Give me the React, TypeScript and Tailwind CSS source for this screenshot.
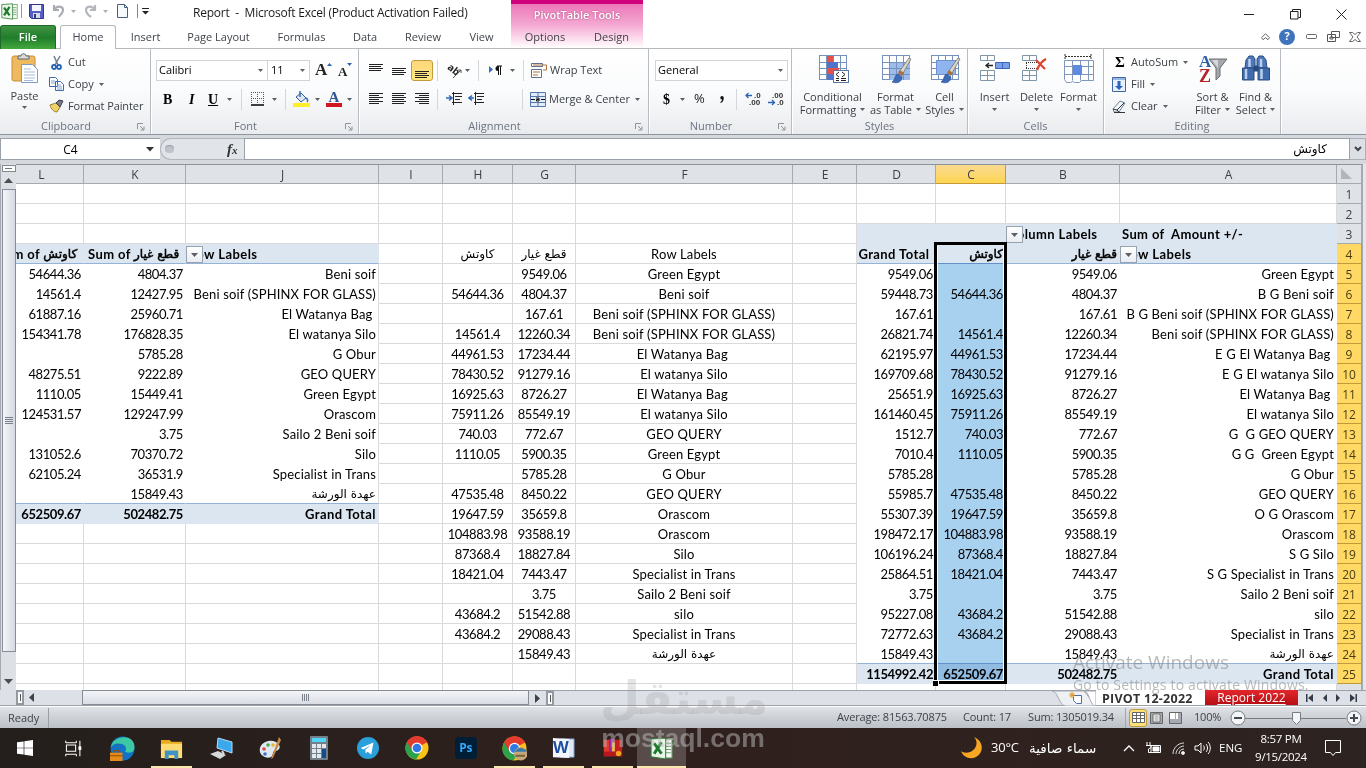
import React from 'react';

type Cell = string | null;

const GRID = 'grid grid-cols-[68px_102px_193px_64px_70px_63px_217px_64px_79px_70px_114px_217px_25px]';
const COLS = ['L', 'K', 'J', 'I', 'H', 'G', 'F', 'E', 'D', 'C', 'B', 'A'];

// one line per sheet row: L, K, J, I, H, G, F, E, D, C, B, A
const rows: Cell[][] = [
  [null, null, null, null, null, null, null, null, null, null, null, null],
  [null, null, null, null, null, null, null, null, null, null, null, null],
  [null, null, null, null, null, null, null, null, null, null, 'Column Labels', 'Sum of  Amount +/-'],
  ['Sum of كاوتش ', 'Sum of قطع غيار ', 'Row Labels', null, 'كاوتش', 'قطع غيار', 'Row Labels', null, 'Grand Total ', 'كاوتش', 'قطع غيار', 'Row Labels'],
  ['54644.36', '4804.37', 'Beni soif', null, null, '9549.06', 'Green Egypt', null, '9549.06', null, '9549.06', 'Green Egypt'],
  ['14561.4', '12427.95', 'Beni soif (SPHINX FOR GLASS)', null, '54644.36', '4804.37', 'Beni soif', null, '59448.73', '54644.36', '4804.37', 'B G Beni soif'],
  ['61887.16', '25960.71', 'El Watanya Bag ', null, null, '167.61', 'Beni soif (SPHINX FOR GLASS)', null, '167.61', null, '167.61', 'B G Beni soif (SPHINX FOR GLASS)'],
  ['154341.78', '176828.35', 'El watanya Silo', null, '14561.4', '12260.34', 'Beni soif (SPHINX FOR GLASS)', null, '26821.74', '14561.4', '12260.34', 'Beni soif (SPHINX FOR GLASS)'],
  [null, '5785.28', 'G Obur', null, '44961.53', '17234.44', 'El Watanya Bag ', null, '62195.97', '44961.53', '17234.44', 'E G El Watanya Bag '],
  ['48275.51', '9222.89', 'GEO QUERY', null, '78430.52', '91279.16', 'El watanya Silo', null, '169709.68', '78430.52', '91279.16', 'E G El watanya Silo'],
  ['1110.05', '15449.41', 'Green Egypt', null, '16925.63', '8726.27', 'El Watanya Bag ', null, '25651.9', '16925.63', '8726.27', 'El Watanya Bag '],
  ['124531.57', '129247.99', 'Orascom', null, '75911.26', '85549.19', 'El watanya Silo', null, '161460.45', '75911.26', '85549.19', 'El watanya Silo'],
  [null, '3.75', 'Sailo 2 Beni soif', null, '740.03', '772.67', 'GEO QUERY', null, '1512.7', '740.03', '772.67', 'G  G GEO QUERY'],
  ['131052.6', '70370.72', 'Silo', null, '1110.05', '5900.35', 'Green Egypt', null, '7010.4', '1110.05', '5900.35', 'G G  Green Egypt'],
  ['62105.24', '36531.9', 'Specialist in Trans', null, null, '5785.28', 'G Obur', null, '5785.28', null, '5785.28', 'G Obur'],
  [null, '15849.43', 'عهدة الورشة', null, '47535.48', '8450.22', 'GEO QUERY', null, '55985.7', '47535.48', '8450.22', 'GEO QUERY'],
  ['652509.67', '502482.75', 'Grand Total', null, '19647.59', '35659.8', 'Orascom', null, '55307.39', '19647.59', '35659.8', 'O G Orascom'],
  [null, null, null, null, '104883.98', '93588.19', 'Orascom', null, '198472.17', '104883.98', '93588.19', 'Orascom'],
  [null, null, null, null, '87368.4', '18827.84', 'Silo', null, '106196.24', '87368.4', '18827.84', 'S G Silo'],
  [null, null, null, null, '18421.04', '7443.47', 'Specialist in Trans', null, '25864.51', '18421.04', '7443.47', 'S G Specialist in Trans'],
  [null, null, null, null, null, '3.75', 'Sailo 2 Beni soif', null, '3.75', null, '3.75', 'Sailo 2 Beni soif'],
  [null, null, null, null, '43684.2', '51542.88', 'silo', null, '95227.08', '43684.2', '51542.88', 'silo'],
  [null, null, null, null, '43684.2', '29088.43', 'Specialist in Trans', null, '72772.63', '43684.2', '29088.43', 'Specialist in Trans'],
  [null, null, null, null, null, '15849.43', 'عهدة الورشة', null, '15849.43', null, '15849.43', 'عهدة الورشة'],
  [null, null, null, null, null, null, null, null, '1154992.42', '652509.67', '502482.75', 'Grand Total'],
];

function cellClass(r: number, c: number, v: Cell) {
  const left = c <= 2 && r >= 4 && r <= 17;
  const right = c >= 8 && r >= 3;
  const head = (left && r === 4) || (right && (r === 3 || r === 4));
  const total = (left && r === 17) || (right && r === 25);
  const label = v !== null && !/^[\d.]+$/.test(v);
  let cls = '';
  if (head || total) cls += ' bg-[#dce6f1] font-bold';
  if (!label) cls += ' tracking-[-0.42px]';
  else if (head && (c <= 1 || r === 3)) cls += ' tracking-[0.38px]';
  else if (head || total) cls += ' tracking-[0.42px]';
  else cls += ' tracking-[0.16px]';
  if (head && r === 4) cls += ' border-b border-b-[#95b3d7]';
  else if ((left && r === 16) || (right && r === 24)) cls += ' border-b border-b-[#95b3d7]';
  else if (!left && !right) cls += ' border-b border-b-[#d9dadc]';
  else cls += ' border-b border-b-transparent';
  if ((!left && !right) || (c === 2 && r !== 4 && r !== 17)) cls += ' border-r border-r-[#d9dadc]';
  else cls += ' border-r border-r-transparent';
  if (c >= 4 && c <= 6) cls += ' justify-center';
  else if (r <= 4 && (c === 2 || c === 11 || (c === 10 && r === 3))) cls += ' justify-start';
  else cls += ' justify-end';
  return cls;
}

const isArabic = (s: string) => /[\u0600-\u06ff]/.test(s);

function Arabic({ text, bold }: { text: string; bold: boolean }) {
  const parts = text.split(/([\u0600-\u06ff][\u0600-\u06ff ]*)/).filter(Boolean);
  return (
    <>
      {parts.map((p, i) => (
        <span key={i} className={'shrink-0 ' + (isArabic(p) ? "font-['DejaVu_Sans',sans-serif] text-[12px] font-normal tracking-normal " + (bold ? '[-webkit-text-stroke:0.5px_#000]' : '') : '')}>{p}</span>
      ))}
    </>
  );
}

function FilterButton() {
  return (
    <span className="absolute left-0 top-[2px] flex h-[17px] w-[17px] items-center justify-center border border-[#98a3b1] bg-gradient-to-b from-white to-[#e9edf2]">
      <svg width="7" height="4" viewBox="0 0 7 4"><path d="M0 0h7L3.500 4z" fill="#5b6068" /></svg>
    </span>
  );
}

function Arrow({ className = '' }: { className?: string }) {
  return (
    <svg width="5" height="3" viewBox="0 0 5 3" className={'shrink-0 ' + className}>
      <path d="M0 0h5L2.5 3z" fill="#5b6068" />
    </svg>
  );
}

function Launcher() {
  return (
    <svg width="8" height="8" viewBox="0 0 8 8" className="absolute bottom-[3px] right-[5px]" fill="none" stroke="#8d929a">
      <path d="M.5 6V.5H6M3 3l3.5 3.5M7 3.5V7H3.5" />
    </svg>
  );
}

function Group({ label, width, launcher, children }: { label: string; width: string; launcher?: boolean; children: React.ReactNode }) {
  return (
    <section className={'relative flex h-full shrink-0 flex-col border-r border-[#b9bdc3] shadow-[1px_0_0_#fff] ' + width}>
      <div className="h-[70px]">{children}</div>
      <div className={'text-center text-[11px] leading-[16px] text-[#6c7380] ' + (launcher ? 'pr-[18px]' : '')}>{label}</div>
      {launcher && <Launcher />}
    </section>
  );
}

function Sep({ className = '' }: { className?: string }) {
  return <span className={'h-[21px] w-px shrink-0 bg-[#d3d6da] ' + className} />;
}

function Big({ icon, a, b, width }: { icon: React.ReactNode; a: string; b?: string; width: string }) {
  return (
    <div className={'flex shrink-0 flex-col items-center whitespace-nowrap pt-[5px] leading-[13px] ' + width}>
      <div className="flex h-[36px] items-start">{icon}</div>
      <div>{a}</div>
      <div className="flex h-[13px] items-center">
        {b}
        <Arrow className={b ? 'ml-[4px]' : ''} />
      </div>
    </div>
  );
}

function Lines({ w, y, className = '' }: { w: number[]; y: number; className?: string }) {
  return (
    <svg width="16" height="16" viewBox="0 0 16 16" className={'shrink-0 ' + className}>
      {w.map((n, i) => <rect key={i} x={n > 0 ? 1 : 15 + n} y={y + i * 2} width={Math.abs(n)} height="1" fill="#222" />)}
    </svg>
  );
}

function TableIcon({ kind }: { kind: 'cond' | 'table' | 'style' }) {
  return (
    <svg width="32" height="32" viewBox="0 0 32 32">
      <rect x="2.500" y="1.500" width="27" height="24" fill="#fff" stroke="#7791bd" />
      {kind === 'table' && <rect x="9" y="8" width="21" height="18" fill="#9dbcec" />}
      <path d="M9.500 2v24M16.500 2v24M23.500 2v24M2 8.500h28M2 14.500h28M2 20.500h28" stroke="#7791bd" fill="none" />
      {kind === 'style' && <rect x="7.500" y="6.500" width="19" height="14" fill="#8fb4f0" stroke="#6f92cf" />}
      {kind === 'cond' && (
        <>
          <path d="M10 2h6v6h-6zM10 14h12v6H10z" fill="#e2514a" />
          <path d="M10 8h11v6H10zM10 20h6v6h-6z" fill="#4f74c9" />
          <rect x="16.500" y="16.500" width="15" height="12" fill="#fff" stroke="#5c76a3" />
          <path d="M22 18l-3 2.500 3 2.500M19 24.500h3M25 18l3 2.500-3 2.500M24 24.500h5M24 26.500h5M19 26.500h3" fill="none" stroke="#222" />
        </>
      )}
      {kind !== 'cond' && (
        <>
          <path d="M31 5l-2-1-10 14 3 3z" fill="#d8d5cf" stroke="#77726b" strokeWidth=".8" />
          <path d="M20 16l-2 3 4 3 2-3z" fill="#a97142" />
          <path d="M18 20c-4 1-2 5-6 8 5 2 10 0 10-5z" fill="#3c6cb8" stroke="#2b4c86" strokeWidth=".6" />
        </>
      )}
    </svg>
  );
}

function CellsIcon({ kind }: { kind: 'insert' | 'delete' | 'format' }) {
  if (kind === 'format') {
    return (
      <svg width="32" height="32" viewBox="0 0 32 32">
        <path d="M2 2.500h26M2 0v5M28 0v5" stroke="#333" strokeDasharray="2 1" />
        <path d="M1.500 6.500h29v20h-12l-2 2h-5l-2-1-2 1h-4l-2-3z" fill="#fff" stroke="#7f97bd" />
        <path d="M1.500 12.500h29M1.500 20.500h29M9.500 6.500v20M17.500 6.500v20M25.500 6.500v20" stroke="#7f97bd" />
        <rect x="10" y="11" width="9" height="10" fill="#5e8ae0" />
      </svg>
    );
  }
  return (
    <svg width="32" height="32" viewBox="0 0 32 32">
      <path d="M1.500 1.500h14v5h-14zM8.500 1.500v5M1.500 16.500h14v10h-14zM8.500 16.500v10M1.500 21.500h14" fill="#fff" stroke="#7f97a8" />
      {kind === 'insert' ? (
        <>
          <path d="M16.500 8.500h14v6h-14zM23.500 8.500v6" fill="#79a0ea" stroke="#3f66b4" />
          <path d="M7 11.500h7M10 9l-3 2.500 3 2.500" fill="none" stroke="#222" strokeWidth="1.300" />
        </>
      ) : (
        <>
          <path d="M5.500 9v5M5 8.500h12M5 14.500h12" stroke="#333" strokeDasharray="1 1" />
          <path d="M15 6l9 9M25 5c-4 2-7 6-9 11" stroke="#e0422d" strokeWidth="2.200" fill="none" />
        </>
      )}
    </svg>
  );
}

function ExcelLogo({ size }: { size: number }) {
  return (
    <svg width={size} height={size} viewBox="0 0 22 22" className="shrink-0">
      <rect x="8" y="2" width="13" height="18" fill="#f4faf3" stroke="#6aa568" />
      <path d="M15 6h5M15 9h5M15 12h5M15 15h5" stroke="#6aa568" />
      <path d="M1 2l14-1v20L1 19z" fill="#e9f5e7" stroke="#2d7a33" />
      <path d="M4 6l7 10M11 5L4 16" stroke="#1c7a2c" strokeWidth="2.800" />
    </svg>
  );
}

function Chrome() {
  return (
    <>
      <circle cx="12" cy="12" r="11.500" fill="#fbc116" />
      <path d="M12 12L2 6.200A11.500 11.500 0 0 1 22 6.200z" fill="#e33b2e" />
      <path d="M12 12L2 6.200A11.500 11.500 0 0 0 11 23.500l5.500-9z" fill="#2ba24c" />
      <path d="M12 6.500h10.300A11.500 11.500 0 0 0 2 6.200l5.200 8.500z" fill="#e33b2e" />
      <circle cx="12" cy="12" r="5.500" fill="#fff" />
      <circle cx="12" cy="12" r="4.300" fill="#2f78e8" />
    </>
  );
}

function Task({ children, size = 24, active }: { children: React.ReactNode; size?: number; active?: boolean }) {
  return (
    <div className="relative flex h-full w-[49px] shrink-0 items-center justify-center">
      <svg width={size} height={size} viewBox="0 0 24 24">{children}</svg>
      {active && <span className="absolute inset-x-[4px] bottom-0 h-[2px] bg-[#f8e8ac]" />}
    </div>
  );
}

function TitleBar() {
  return (
    <div className="flex h-[25px] shrink-0 bg-white">
      <div className="flex w-[193px] shrink-0 items-center pb-[3px] pl-px">
        <ExcelLogo size={17} />
        <span className="ml-[3px] h-[14px] w-px bg-[#999]" />
        <svg width="15" height="15" viewBox="0 0 15 15" className="ml-[7px]">
          <path d="M.5.500h14v14h-12l-2-2z" fill="#5560c4" stroke="#2f3689" />
          <rect x="3" y="1" width="9" height="6" fill="#f4f6ff" />
          <rect x="4" y="9" width="7" height="5" fill="#d7dbe8" />
          <rect x="5" y="10" width="2" height="4" fill="#333a80" />
        </svg>
        <svg width="13" height="14" viewBox="0 0 13 14" className="ml-[8px]" fill="none" stroke="#a9adb3" strokeWidth="2.200">
          <path d="M2 1v5h5M2 6c3-5 9-4 9 0 0 3-3 5-4 7" />
        </svg>
        <Arrow className="ml-[6px] opacity-50" />
        <svg width="13" height="14" viewBox="0 0 13 14" className="ml-[8px]" fill="none" stroke="#b4b8be" strokeWidth="2.200">
          <path d="M11 1v5H6M11 6C8 1 2 2 2 6c0 3 2 5 5 7" />
        </svg>
        <Arrow className="ml-[6px] opacity-50" />
        <svg width="11" height="14" viewBox="0 0 11 14" className="ml-[9px]">
          <path d="M.5.500h7l3 3v10H.5z" fill="#f6fafd" stroke="#46607c" />
          <path d="M7.500.500v3h3" fill="none" stroke="#46607c" />
        </svg>
        <span className="ml-[9px] h-[14px] w-px bg-[#888]" />
        <svg width="7" height="7" viewBox="0 0 7 7" className="ml-[4px]"><path d="M0 .5h7" stroke="#222" /><path d="M0 3h7L3.500 6.500z" fill="#222" /></svg>
      </div>
      <div className="w-[318px] shrink-0 whitespace-pre pt-px text-[12px] leading-[24px] tracking-[-0.24px] text-[#1b1b1b]">Report  -  Microsoft Excel (Product Activation Failed)</div>
      <div className="w-[132px] shrink-0 border-t-4 border-[#d0007c] bg-gradient-to-b from-[#ec76b8] to-[#f3a9d2] text-center text-[11px] font-semibold leading-[22px] text-white [text-shadow:0_0_2px_#a0407a]">PivotTable Tools</div>
      <div className="flex flex-1 items-center justify-end gap-[35px] pr-[19px] pt-[3px]">
        <svg width="11" height="11" viewBox="0 0 11 11"><path d="M0 5.500h10" stroke="#222" /></svg>
        <svg width="11" height="11" viewBox="0 0 11 11" fill="none" stroke="#222"><path d="M.5 2.500h7.500v7.500H.5zM2.500 2.500v-2h8v8h-2" /></svg>
        <svg width="11" height="11" viewBox="0 0 11 11" stroke="#222"><path d="M.5.500l10 10M10.500.500l-10 10" /></svg>
      </div>
    </div>
  );
}

function TabBar() {
  const tab = 'flex h-full shrink-0 items-center justify-center pt-px';
  return (
    <div className="flex h-[24px] shrink-0 bg-white text-[11px] text-[#3f444b] shadow-[inset_0_-1px_0_#b5b9be]">
      <div className="flex w-[56px] shrink-0 items-center justify-center rounded-t-[3px] border border-b-0 border-[#1e6a26] bg-gradient-to-b from-[#3f9443] via-[#1f7d2b] to-[#43a83c] font-semibold text-white">File</div>
      <div className="ml-[4px] flex w-[56px] shrink-0 items-center justify-center rounded-t-[3px] border border-b-0 border-[#b5b9be] bg-white">Home</div>
      <div className={tab + ' ml-px w-[57px]'}>Insert</div>
      <div className={tab + ' w-[89px]'}>Page Layout</div>
      <div className={tab + ' w-[77px]'}>Formulas</div>
      <div className={tab + ' w-[50px]'}>Data</div>
      <div className={tab + ' w-[66px]'}>Review</div>
      <div className={tab + ' w-[51px]'}>View</div>
      <div className="mb-px ml-[4px] flex w-[132px] shrink-0 bg-gradient-to-b from-[#f3a9d2] to-white">
        <div className={tab + ' w-[68px]'}>Options</div>
        <div className={tab + ' w-[65px]'}>Design</div>
      </div>
      <div className="flex flex-1 items-center justify-end gap-[9px] pb-px pr-[5px]">
        <svg width="9" height="8" viewBox="0 0 9 8" fill="#fff" stroke="#666"><path d="M4.500.700l4 4-1.500 2-2.500-2-2.500 2-1.500-2z" /></svg>
        <span className="mr-[2px] flex h-[16px] w-[16px] items-center justify-center rounded-full bg-[#3f74bd] text-[11px] font-bold text-white">?</span>
        <svg width="12" height="6" viewBox="0 0 12 6" fill="#fff" stroke="#666"><rect x=".5" y=".5" width="10" height="4" rx="1" /></svg>
        <svg width="13" height="11" viewBox="0 0 13 11" fill="#fff" stroke="#555"><path d="M4.500.500h8v6h-8zM.5 3.500h8v7h-8zM3 6h3v2H3z" /></svg>
        <svg width="12" height="10" viewBox="0 0 12 10" fill="#fff" stroke="#666"><path d="M.500.500h3L6 2.500l2.500-2h3L8 5l3.500 4.500h-3L6 7.500l-2.500 2h-3L4 5z" /></svg>
      </div>
    </div>
  );
}

function Ribbon() {
  const serif = "shrink-0 font-['Liberation_Serif',serif] font-bold text-[14px] text-black";
  return (
    <div className="flex h-[86px] shrink-0 border-b border-[#8f959d] bg-gradient-to-b from-white via-[#fafbfc] to-[#e9ebee] text-[11px] text-[#3a3f46]">
      <Group label="Clipboard" width="w-[151px]" launcher>
        <div className="flex">
          <div className="flex w-[49px] shrink-0 flex-col items-center pt-[4px]">
            <svg width="28" height="32" viewBox="0 0 28 32">
              <rect x="1" y="3" width="23" height="25" rx="2" fill="#efb95e" stroke="#c58f3a" />
              <path d="M7 6V3h3c0-3 5-3 5 0h3v3z" fill="#d8dade" stroke="#61656b" />
              <path d="M10.500 11.500h11l5 5v13h-16z" fill="#fff" stroke="#7f9ac4" />
              <path d="M13 16h7M13 19h11M13 22h11M13 25h11M13 27.500h9" stroke="#a5bbdc" />
            </svg>
            <div className="mt-[4px] leading-[14px]">Paste</div>
            <Arrow className="mt-[3px]" />
          </div>
          <div className="flex flex-col whitespace-nowrap pt-[2px] leading-[22px]">
            <div className="flex h-[22px] items-center gap-[4px]">
              <svg width="15" height="15" viewBox="0 0 15 15" fill="none"><path d="M5 1l4 9M11 1L6 10" stroke="#6e7f94" strokeWidth="1.500" /><circle cx="5" cy="12" r="2" stroke="#2a63b4" strokeWidth="1.800" /><circle cx="10" cy="12" r="2" stroke="#2a63b4" strokeWidth="1.800" /></svg>Cut
            </div>
            <div className="flex h-[22px] items-center gap-[4px]">
              <svg width="15" height="14" viewBox="0 0 15 14" fill="#fff" stroke="#3d6aac"><path d="M.500.500h6l2 2v7h-8zM6.500 4.500h5l3 3v6h-8z" /><path d="M2 4h4M2 6h4M8 8h4M8 10h5M8 12h5" stroke="#7fa3d8" /></svg>Copy <Arrow className="ml-px" />
            </div>
            <div className="flex h-[22px] items-center gap-[4px] tracking-[-0.1px]">
              <svg width="15" height="14" viewBox="0 0 15 14"><path d="M1 6l6-2 4 4-3 5c-3 0-6-3-7-7z" fill="#f0d268" stroke="#9c812b" /><path d="M7 4l3-3 4 1-3 6z" fill="#777986" stroke="#3d3f4a" /></svg>Format Painter
            </div>
          </div>
        </div>
      </Group>

      <Group label="Font" width="w-[208px]" launcher>
        <div className="flex h-[32px] items-end pl-[5px] text-black">
          <div className="flex h-[21px] w-[112px] shrink-0 items-center justify-between border border-[#d1d4d9] bg-white pl-[2px] pr-[4px]">Calibri<Arrow /></div>
          <div className="-ml-px flex h-[21px] w-[43px] shrink-0 items-center justify-between border border-[#d1d4d9] bg-white pl-[3px] pr-[4px]">11<Arrow /></div>
          <span className="ml-[5px] flex h-[21px] w-[22px] shrink-0 font-['Liberation_Serif',serif] text-[17px] font-bold leading-[20px] text-[#222]">A<svg width="5" height="3" viewBox="0 0 5 3" className="mt-[3px]"><path d="M0 3h5L2.500 0z" fill="#3463ad" /></svg></span>
          <span className="flex h-[21px] w-[18px] shrink-0 pl-px font-['Liberation_Serif',serif] text-[13px] font-bold leading-[23px] text-[#222]">A<svg width="5" height="3" viewBox="0 0 5 3" className="mt-[3px]"><path d="M0 0h5L2.500 3z" fill="#3463ad" /></svg></span>
        </div>
        <div className="flex h-[33px] items-center pl-[12px] pt-[3px]">
          <span className={serif + ' w-[23px]'}>B</span>
          <span className={serif + ' w-[22px] pl-[3px] italic'}>I</span>
          <span className={serif + ' w-[19px] underline'}>U</span>
          <Arrow className="mr-[9px]" />
          <Sep />
          <svg width="14" height="14" viewBox="0 0 14 14" className="ml-[9px] mr-[7px] shrink-0"><path d="M0 .5h13M0 6.500h13M.5 0v12M6.500 0v12M12.500 0v12" stroke="#555" strokeDasharray="1 1" /><path d="M0 13h13" stroke="#000" strokeWidth="1.500" /></svg>
          <Arrow className="mr-[8px]" />
          <Sep />
          <svg width="17" height="16" viewBox="0 0 17 16" className="ml-[7px] mr-[5px] shrink-0"><path d="M3 6l5-4 5 5-5 4z" fill="#dce6f4" stroke="#3b5b8c" /><path d="M7 0v6M13 7c2 1 2 3 1 4" stroke="#3b6cb8" strokeWidth="1.500" fill="none" /><rect y="12" width="17" height="4" fill="#ffef29" /></svg>
          <Arrow className="mr-[6px]" />
          <span className="mr-[5px] flex w-[16px] shrink-0 flex-col items-center"><b className="font-['Liberation_Serif',serif] text-[15px] leading-[12px] text-[#2f5597]">A</b><i className="h-[4px] w-full bg-[#d11521]" /></span>
          <Arrow />
        </div>
      </Group>

      <Group label="Alignment" width="w-[290px]" launcher>
        <div className="flex h-[32px] items-end pl-[9px]">
          <Lines w={[14, 12, 14, 12]} y={1} className="mb-[2px]" />
          <Lines w={[14, 12, 14, 12]} y={5} className="mb-[2px] ml-[7px]" />
          <div className="ml-[4px] flex h-[21px] w-[22px] shrink-0 items-center justify-center rounded-[3px] border border-[#c29b3d] bg-gradient-to-b from-[#fdd77c] to-[#ffe77f]"><Lines w={[14, 12, 14, 12]} y={8} /></div>
          <Sep className="ml-[4px]" />
          <span className="ml-[9px] flex h-[21px] w-[23px] shrink-0 items-center justify-between"><svg width="16" height="16" viewBox="0 0 16 16"><text x="0" y="9" transform="rotate(38 5 7)" fontSize="10" fontWeight="700" fill="#222">ab</text><path d="M6 15l8-8M11 7h3v3" stroke="#555" fill="none" /></svg><Arrow /></span>
          <Sep className="ml-[8px]" />
          <span className="ml-[10px] flex h-[21px] w-[26px] shrink-0 items-center justify-between"><svg width="13" height="11" viewBox="0 0 13 11"><path d="M0 1v7l4-3.500z" fill="#3a69b6" /><path d="M8 1h5M9.500 1v9M11.500 1v9" stroke="#111" /><path d="M9 1a2.500 2.500 0 0 0 0 5z" fill="#111" /></svg><Arrow /></span>
          <Sep className="ml-[8px]" />
          <span className="ml-[7px] flex h-[21px] shrink-0 items-center gap-[3px] whitespace-nowrap"><svg width="16" height="15" viewBox="0 0 16 15"><path d="M.500.500h11v3H.5zM.5 6.500h10v8H.5z" fill="#fff" stroke="#5e708c" /><path d="M2 2h13.500v5H12M2 9h7M2 12h5" fill="none" stroke="#b0723c" /></svg>Wrap Text</span>
        </div>
        <div className="flex h-[33px] items-center pl-[9px] pt-[3px]">
          <Lines w={[14, 10, 14, 10, 14, 10]} y={2} />
          <Lines w={[14, 12, 14, 12, 14, 12]} y={2} className="ml-[7px]" />
          <Lines w={[-14, -10, -14, -10, -14, -10]} y={2} className="ml-[7px]" />
          <Sep className="ml-[7px]" />
          <svg width="17" height="14" viewBox="0 0 17 14" className="ml-[8px] shrink-0"><path d="M6 1.500h10M9 4.500h7M9 7.500h5M6 10.500h10M7.500 0v13" stroke="#222" /><path d="M0 6h5M3 3.500L6 6 3 8.500" stroke="#2f65b8" strokeWidth="1.500" fill="none" /></svg>
          <svg width="17" height="14" viewBox="0 0 17 14" className="ml-[5px] shrink-0"><path d="M6 1.500h10M9 4.500h7M9 7.500h5M6 10.500h10M7.500 0v13" stroke="#222" /><path d="M1 6h5M4 3.500L1 6l3 2.500" stroke="#2f65b8" strokeWidth="1.500" fill="none" /></svg>
          <Sep className="ml-[37px]" />
          <span className="ml-[7px] flex shrink-0 items-center gap-[3px] whitespace-nowrap"><svg width="16" height="15" viewBox="0 0 16 15"><path d="M.500.500h15v14H.5zM.5 4.500h15M.5 10.500h15M8 .5v4M8 10.500v4" fill="#e2ebf8" stroke="#5577a8" /><path d="M1 7.500h4M15 7.500h-4M6 6h3v3H6.500V7.500H9" stroke="#111" fill="none" /></svg>Merge &amp; Center <Arrow className="ml-[2px]" /></span>
        </div>
      </Group>

      <Group label="Number" width="w-[143px]" launcher>
        <div className="flex h-[32px] items-end pl-[6px] text-black">
          <div className="flex h-[21px] w-[133px] shrink-0 items-center justify-between border border-[#d1d4d9] bg-white pl-[2px] pr-[4px]">General<Arrow /></div>
        </div>
        <div className="flex h-[33px] items-center pl-[14px] pt-[3px]">
          <span className={serif + ' mr-[10px]'}>$</span>
          <Arrow className="mr-[9px]" />
          <span className="w-[26px] shrink-0 text-[13px] text-[#222]">%</span>
          <svg width="4" height="7" viewBox="0 0 4 8" className="mr-[12px] shrink-0"><path d="M2 0a2 2 0 0 1 2 2c0 3-1 5-3.500 6L0 7c1.500-1 2-2 2-3a2 2 0 0 1 0-4z" fill="#111" /></svg>
          <Sep />
          <svg width="16" height="14" viewBox="0 0 16 14" className="ml-[8px] shrink-0" fontSize="8" fontWeight="700" fontFamily="Liberation Sans" fill="#333"><text x="9" y="6">.0</text><text x="4" y="13">.00</text><path d="M7 3.500H1M3.500 1L1 3.500 3.500 6" stroke="#2f65b8" strokeWidth="1.300" fill="none" /></svg>
          <svg width="16" height="14" viewBox="0 0 16 14" className="ml-[7px] shrink-0" fontSize="8" fontWeight="700" fontFamily="Liberation Sans" fill="#333"><text x="4" y="6">.00</text><text x="9" y="13">.0</text><path d="M0 10.500h6M4 8l2.500 2.500L4 13" stroke="#2f65b8" strokeWidth="1.300" fill="none" /></svg>
        </div>
      </Group>

      <Group label="Styles" width="w-[176px]">
        <div className="flex pl-[6px]">
          <Big icon={<TableIcon kind="cond" />} a="Conditional" b="Formatting" width="w-[69px]" />
          <Big icon={<TableIcon kind="table" />} a="Format" b="as Table" width="w-[57px]" />
          <Big icon={<TableIcon kind="style" />} a="Cell" b="Styles" width="w-[41px]" />
        </div>
      </Group>

      <Group label="Cells" width="w-[136px]">
        <div className="flex pl-[5px]">
          <Big icon={<CellsIcon kind="insert" />} a="Insert" width="w-[43px]" />
          <Big icon={<CellsIcon kind="delete" />} a="Delete" width="w-[41px]" />
          <Big icon={<CellsIcon kind="format" />} a="Format" width="w-[43px]" />
        </div>
      </Group>

      <Group label="Editing" width="w-[177px]">
        <div className="flex">
          <div className="flex w-[85px] shrink-0 flex-col whitespace-nowrap pl-[8px] pt-[2px]">
            <div className="flex h-[22px] items-center gap-[4px]"><b className="w-[15px] pl-[3px] font-['Liberation_Serif',serif] text-[15px] text-black">Σ</b>AutoSum <Arrow className="ml-px" /></div>
            <div className="flex h-[22px] items-center gap-[5px]"><svg width="14" height="15" viewBox="0 0 14 15"><path d="M.500.500h13v14H.5z" fill="#e8f0fb" stroke="#3f66a8" /><path d="M1 1h12v2H1z" fill="#9bb6e0" /><path d="M5.500 4h3v5H11l-4 4-4-4h2.500z" fill="#2d62c0" /></svg>Fill <Arrow /></div>
            <div className="flex h-[22px] items-center gap-[5px]"><svg width="14" height="13" viewBox="0 0 14 13"><path d="M1 9l7-8 5 2-6 9H2z" fill="#f1f4f9" stroke="#6c7f9c" /><path d="M1 9l4 1 2 2M5 10l7-7M2 12.500h11" stroke="#333" fill="none" /></svg>Clear <Arrow /></div>
          </div>
          <Big
            icon={
              <svg width="32" height="32" viewBox="0 0 32 32">
                <text x="2" y="13" fontFamily="Liberation Serif" fontSize="17" fontWeight="700" fill="#2c5fa8">A</text>
                <text x="2" y="28" fontFamily="Liberation Serif" fontSize="18" fontWeight="700" fill="#b0242a">Z</text>
                <path d="M12 5h18l-7 9v8l-4 4V14z" fill="#a4a8ad" stroke="#6a6e74" />
                <path d="M15 6h6v8z" fill="#d4d7db" />
              </svg>
            }
            a="Sort &amp;" b="Filter" width="w-[47px]" />
          <Big
            icon={
              <svg width="30" height="30" viewBox="0 0 30 30" stroke="#2c4d82">
                <path d="M5 6l3-4h4l2 3v9H4z" fill="#4d78b8" />
                <path d="M25 6l-3-4h-4l-2 3v9h10z" fill="#4d78b8" />
                <path d="M1.500 14h11.500v12H1.500zM17 14h11.500v12H17z" fill="#3f6cad" />
                <path d="M5 15v10M20.500 15v10M8.500 5v8M20 5v8" stroke="#b9d0f0" strokeWidth="2.500" />
                <path d="M13 12h4v5h-4z" fill="#27497f" />
              </svg>
            }
            a="Find &amp;" b="Select" width="w-[39px]" />
        </div>
      </Group>
    </div>
  );
}

function FormulaBar() {
  return (
    <div className="flex h-[29px] shrink-0 bg-[#d5d9de] pb-[4px] pt-[3px]">
      <div className="flex h-[22px] w-[160px] shrink-0 items-center border-y border-l border-[#9ba1a9] bg-white text-black">
        <span className="w-[139px] pt-px text-center text-[12px]">C4</span>
        <svg width="8" height="5" viewBox="0 0 8 5" className="ml-[6px]"><path d="M0 0h8L4 4.500z" fill="#333" /></svg>
      </div>
      <div className="flex h-[22px] w-[84px] shrink-0 items-center rounded-l-full border-y border-l border-[#b2b7be] bg-[#e1e4e8] pl-[4px]">
        <span className="h-[8px] w-[9px] rounded-full bg-[#c0c4ca] shadow-[inset_0_1px_1px_#9a9fa6]" />
        <span className="ml-[53px] font-['Liberation_Serif',serif] text-[15px] font-bold italic leading-none text-[#333]">f<span className="text-[11px]">x</span></span>
      </div>
      <div className="flex h-[22px] flex-1 items-center justify-end border border-[#9ba1a9] bg-white pr-[22px] font-['DejaVu_Sans',sans-serif] text-[12px] text-black">كاوتش</div>
      <div className="flex h-[22px] w-[16px] shrink-0 items-center justify-center border border-l-0 border-[#aab0b8] bg-[#dcdfe4]">
        <svg width="8" height="6" viewBox="0 0 8 6" fill="none" stroke="#444" strokeWidth="2"><path d="M1 1l3 3 3-3" /></svg>
      </div>
    </div>
  );
}

function Sheet() {
  return (
    <div className="flex h-[526px] shrink-0 bg-[#e3e6ea]">
      <div className="flex w-[16px] shrink-0 flex-col items-center border-l border-[#a6abb2] bg-[#dde1e6]">
        <div className="mt-px flex h-[7px] w-[14px] shrink-0 items-center justify-center border border-[#83888f] bg-white"><span className="h-px w-[7px] bg-[#777]" /></div>
        <svg width="9" height="5" viewBox="0 0 9 5" className="mb-[6px] mt-[6px] shrink-0"><path d="M0 5h9L4.500 0z" fill="#4a4f56" /></svg>
        <div className="flex h-[463px] w-[14px] shrink-0 flex-col items-center justify-center gap-px border border-[#868c98] bg-gradient-to-r from-[#f4f6f9] to-[#d5d9e1]">
          <span className="h-px w-[8px] bg-[#7b818a]" />
          <span className="h-px w-[8px] bg-[#7b818a]" />
          <span className="h-px w-[8px] bg-[#7b818a]" />
          <span className="h-px w-[8px] bg-[#7b818a]" />
        </div>
        <svg width="9" height="5" viewBox="0 0 9 5" className="mt-[27px] shrink-0"><path d="M0 0h9L4.500 5z" fill="#4a4f56" /></svg>
      </div>
      <div className="relative w-[1346px] shrink-0 overflow-hidden bg-white font-['Lato',sans-serif] text-[13px] leading-[21px] text-black">
        <div className={GRID + ' h-[20px] grid-rows-[19px] border-t border-[#8e949c] text-center font-[\'Open_Sans\',sans-serif] text-[12px] leading-[20px] text-[#3b3f45]'}>
          {COLS.map((c) => (
            <div key={c} className={'border-b border-r ' + (c === 'L' ? 'pr-[16px] ' : 'pl-px ') + (c === 'C' ? 'border-[#c29a3a] bg-gradient-to-b from-[#f9d98f] to-[#ffd64f]' : 'border-[#a5aab1] bg-[#dfe2e7]')}>{c}</div>
          ))}
          <div className="flex items-end border-b border-r border-[#a5aab1] bg-[#dfe2e7] p-[4px]">
            <svg width="11" height="11" viewBox="0 0 11 11"><path d="M0 0v11h11z" fill="#b2b6bc" /></svg>
          </div>
        </div>
        {rows.map((row, i) => {
          const r = i + 1;
          return (
            <div key={r} className={GRID + ' h-[20px] grid-rows-[20px]'}>
              {row.map((v, c) => (
                <div key={c} className={'relative flex min-w-0 overflow-hidden whitespace-pre px-[2px]' + cellClass(r, c, v)}>
                  {v && (isArabic(v) ? <Arabic text={v} bold={r === 4 && (c < 3 || c > 7)} /> : v)}
                  {((r === 4 && (c === 2 || c === 11)) || (r === 3 && c === 10)) && <FilterButton />}
                </div>
              ))}
              <div className={"border-b border-r text-center font-['Open_Sans',sans-serif] text-[12px] " + (r >= 4 ? 'border-[#c29a3a] bg-[#ffd964] text-[#4a3c14]' : 'border-[#a5aab1] bg-[#dfe2e7] text-[#3b3f45]')}>{r}</div>
            </div>
          );
        })}
        <div className={GRID + ' h-[6px]'}>
          {COLS.map((c) => <div key={c} className="border-r border-[#d9dadc]" />)}
          <div className="border-r border-[#a5aab1] bg-[#dfe2e7]" />
        </div>
        {/* selected range C4:C25 */}
        <div className="pointer-events-none absolute left-[918px] top-[78px] h-[442px] w-[73px] border-[3px] border-black">
          <div className="h-full border border-t-0 border-white pt-[18px]">
            <div className="h-full bg-[#3d97dc]/45 mix-blend-multiply" />
          </div>
          <span className="absolute -bottom-[5px] -left-[4px] h-[6px] w-[6px] border-r border-t border-white bg-black" />
        </div>
      </div>
      <div className="w-[4px] border-l border-[#a5aab1]" />
    </div>
  );
}

function SheetTabs() {
  return (
    <div className="flex h-[16px] shrink-0 border-b border-[#9da2aa] bg-[#dde1e7] font-['Open_Sans',sans-serif]">
      <div className="flex w-[82px] shrink-0 items-center pl-[16px]">
        <span className="flex h-[15px] w-[8px] items-center justify-center border-2 border-[#9499a1] bg-white"><i className="h-[7px] w-px bg-[#555]" /></span>
        <svg width="5" height="9" viewBox="0 0 5 9" className="ml-[5px]"><path d="M5 0v9L0 4.500z" fill="#3d4249" /></svg>
      </div>
      <div className="flex w-[447px] shrink-0 items-center justify-center gap-px border border-[#868c96] bg-gradient-to-b from-[#f3f5f8] to-[#dadde4]">
        {[0, 1, 2, 3].map((n) => <i key={n} className="h-[7px] w-px bg-[#7c828b]" />)}
      </div>
      <div className="flex w-[517px] shrink-0 items-center border-t border-[#9da2aa] pl-[6px]">
        <svg width="5" height="9" viewBox="0 0 5 9"><path d="M0 0v9l5-4.500z" fill="#3d4249" /></svg>
        <span className="ml-[6px] flex h-[15px] w-[8px] items-center justify-center border-2 border-[#9499a1] bg-white"><i className="h-[7px] w-px bg-[#555]" /></span>
      </div>
      <div className="flex w-[50px] shrink-0 items-center border-t border-[#9da2aa]">
        <svg width="50" height="15" viewBox="0 0 50 15">
          <path d="M6 0c6 0 7 15 14 15h30L38 0z" fill="#eef0f4" stroke="#a2a7af" />
          <path d="M38 0c6 0 5 15 12 15V0z" fill="#fff" stroke="#a2a7af" />
          <path d="M27.500 4.500h8v8h-5l-3-3z" fill="#fff" stroke="#4a6db0" />
          <path d="M26 1v6M23 4h6M24 2l4 4M28 2l-4 4" stroke="#e7951d" />
        </svg>
      </div>
      <div className="w-[108px] shrink-0 whitespace-nowrap bg-white pl-[6px] text-[12.5px] font-bold leading-[17px] tracking-[0.25px] text-[#333]">PIVOT 12-2022</div>
      <div className="w-[94px] shrink-0 border-l border-white bg-gradient-to-b from-[#e3262b] to-[#b50d13] text-center text-[12px] leading-[16px] text-white"><span className="underline underline-offset-2">Report 2022</span></div>
      <div className="flex flex-1 items-center justify-between border-t border-[#9da2aa] pl-[8px] pr-[9px]">
        <svg width="7" height="8" viewBox="0 0 7 8" fill="#333b48"><path d="M0 0h1.500v8H0zM7 0v8L2 4z" /></svg>
        <svg width="4" height="8" viewBox="0 0 4 8" fill="#333b48"><path d="M4 0v8L0 4z" /></svg>
        <svg width="4" height="8" viewBox="0 0 4 8" fill="#333b48"><path d="M0 0v8l4-4z" /></svg>
        <svg width="7" height="8" viewBox="0 0 7 8" fill="#333b48"><path d="M5.500 0H7v8H5.500zM0 0v8l5-4z" /></svg>
      </div>
    </div>
  );
}

function StatusBar() {
  return (
    <div className="flex h-[22px] shrink-0 items-center border-t border-white bg-gradient-to-b from-[#dfe2e6] to-[#bcc1c7] text-[11px] text-[#3e434a]">
      <div className="w-[49px] shrink-0 border-r border-[#9a9fa6] pl-[8px] leading-[20px]">Ready</div>
      <div className="flex flex-1 justify-end whitespace-nowrap tracking-[-0.15px]">
        <span className="w-[126px]">Average: 81563.70875</span>
        <span className="w-[65px]">Count: 17</span>
        <span className="w-[97px]">Sum: 1305019.34</span>
      </div>
      <span className="mr-[3px] h-[20px] w-px bg-[#a3a8af]" />
      <span className="flex h-[18px] w-[18px] items-center justify-center rounded-[3px] border border-[#c29b3d] bg-[#ffe27a]">
        <svg width="13" height="11" viewBox="0 0 13 11" fill="#fff" stroke="#666"><path d="M.500.500h12v10H.5zM.5 3.500h12M.5 6.500h12M4.500.500v10M8.500.500v10" /></svg>
      </span>
      <svg width="13" height="12" viewBox="0 0 13 12" className="ml-[3px]"><path d="M.500.500h12v11H.5z" fill="#a7abb1" stroke="#666" /><path d="M3 2h7v8H3z" fill="#fff" stroke="#666" /><path d="M4.500 4h4M4.500 6h4M4.500 8h4" stroke="#888" /></svg>
      <svg width="13" height="12" viewBox="0 0 13 12" className="ml-[6px]"><path d="M.500.500h12v11H.5z" fill="#a7abb1" stroke="#666" /><path d="M1 1h5v6H1zM7 1h2v6H7z" fill="#fff" /></svg>
      <span className="ml-[12px] w-[35px] tracking-[-0.2px]">100%</span>
      <svg width="134" height="18" viewBox="0 0 134 18" fill="none" stroke="#777c84">
        <path d="M15 9.500h102" />
        <circle cx="9" cy="9" r="7" fill="#f3f5f7" />
        <circle cx="125" cy="9" r="7" fill="#f3f5f7" />
        <path d="M63.500 3.500h8v8l-4 4-4-4z" fill="#f3f5f7" />
        <path d="M5 9h8M121 9h8M125 5v8" stroke="#444a52" strokeWidth="2" />
      </svg>
      <span className="w-[3px]" />
    </div>
  );
}

function Taskbar() {
  return (
    <div className="flex h-[40px] shrink-0 items-center bg-gradient-to-r from-[#241f1c] via-[#30201d] to-[#2d2320] font-['Open_Sans',sans-serif] text-white">
      <Task size={16}><path d="M0 3.500l10-1.400v9.400H0zM11 2l13-2v11.500H11zM0 12.500h10v9.400L0 20.500zM11 12.500h13V24l-13-2z" fill="#fff" /></Task>
      <Task size={17}><path d="M1 1v3M16 1v3M1 4h15M1 23v-3M16 23v-3M1 20h15M2 7h13v9H2zM21 1v22" fill="none" stroke="#fff" strokeWidth="1.500" /><path d="M19 9h4v5h-4z" fill="#fff" /></Task>
      <Task size={25}>
        <circle cx="12" cy="12" r="11.500" fill="#1173c6" />
        <path d="M1 11C2-1 24-3 23.500 11c0 5-5 6-9 4 3-4-2-9-7-7-3 0-5 1-6.500 3z" fill="#3cc8a3" />
        <path d="M1 11c4-7 12-3 10 1-3 2 0 9 9 8-5 6-15 4-18-2z" fill="#176fc0" />
        <path d="M0 16h12v8H0z" fill="#e68a19" /><path d="M4 16v-2h4v2M0 19h12" stroke="#8b4d0a" fill="none" />
      </Task>
      <Task active size={23}><path d="M1 3h9l2 2h11v17H1z" fill="#e9a91c" /><path d="M1 7h22v15H1z" fill="#ffdc73" /><path d="M5 23v-9h14v9h-4v-4H9v4z" fill="#3d93c8" /></Task>
      <Task size={24}><path d="M9 2l14 4v11L8 12z" fill="#3ba7ec" stroke="#b8dcf4" /><path d="M13 15l2 3" stroke="#ddd" strokeWidth="2" /><path d="M1 18l8-3 8 4-6 4z" fill="#d6dadd" /></Task>
      <Task size={24}><path d="M2 16C0 8 10 2 18 6c6 3 4 9-1 9-3 0-1 4-4 6-4 2-10-1-11-5z" fill="#dfe9f1" /><circle cx="6" cy="13" r="1.800" fill="#e04646" /><circle cx="10" cy="9" r="1.800" fill="#4bab3f" /><circle cx="15" cy="9" r="1.800" fill="#e7b72b" /><circle cx="7" cy="18" r="1.800" fill="#3c72cf" /><path d="M21 1l2 3-8 18-2 1z" fill="#c68848" /></Task>
      <Task size={24}><rect x="3" y="0" width="18" height="24" rx="1" fill="#72808c" /><rect x="5" y="2" width="14" height="4" fill="#4fd4f5" /><path d="M5 8h4v4H5zM10 8h4v4h-4zM15 8h4v4h-4zM5 13h4v4H5zM10 13h4v4h-4zM5 18h4v4H5zM10 18h4v4h-4z" fill="#e4e8eb" /><path d="M15 13h4v9h-4z" fill="#144d8c" /></Task>
      <Task size={22}><circle cx="12" cy="12" r="12" fill="#2a9fd9" /><path d="M4 12l14-6-2.500 13-4-3-2 2-.5-4 6-5-8 4.500z" fill="#fff" /></Task>
      <Task size={24}><Chrome /></Task>
      <Task size={22}><rect width="24" height="24" rx="4" fill="#001e36" /><text x="4.500" y="16.500" fontSize="13" fontWeight="700" fill="#31a8ff">Ps</text></Task>
      <Task size={25} active><Chrome /><circle cx="18" cy="17" r="6.500" fill="#c4a77c" /><path d="M12 15c4-5 9-4 12 0z" fill="#397aa3" /><path d="M13 19h9" stroke="#806237" strokeWidth="2" /></Task>
      <Task size={23} active><path d="M9 2h14v19H9z" fill="#dfe9f8" stroke="#7b9bce" /><path d="M1 1l17 1v20L1 21z" fill="#f3f7fd" /><text x="1" y="17" fontSize="17" fontWeight="700" fill="#1b4f9f">W</text></Task>
      <Task size={22} active><path d="M2 3h6v18H2z" fill="#e13b2e" /><path d="M8 2h5v19H8z" fill="#9c2bb0" /><path d="M13 3h9v18h-9z" fill="#c3201f" /><path d="M11 6h3v10h-3z" fill="#f2c246" /><path d="M2 16h20v5H2z" fill="#b7181b" /><circle cx="18" cy="18" r="3" fill="#f0a523" /></Task>
      <div className="relative flex h-full w-[49px] shrink-0 items-center justify-center bg-white/20"><ExcelLogo size={23} /><span className="absolute inset-x-0 bottom-0 h-[2px] bg-[#f8e8ac]" /></div>

      <div className="flex h-full flex-1 items-center justify-end">
        <svg width="23" height="24" viewBox="0 0 23 24"><path d="M14 1c5 5 2 13-4 15-3 1-7 1-9-1 2 6 9 9 15 6 8-4 8-16-2-20z" fill="#f6a623" /></svg>
        <span className="ml-[8px] w-[38px] text-[13px] tracking-[-0.2px]">30°C</span>
        <span className="w-[72px] whitespace-nowrap font-['DejaVu_Sans',sans-serif] text-[13.5px]">سماء صافية</span>
        <svg width="12" height="8" viewBox="0 0 12 8" className="ml-[22px]" fill="none" stroke="#fff" strokeWidth="1.300"><path d="M1 7l5-5 5 5" /></svg>
        <svg width="16" height="12" viewBox="0 0 16 12" className="ml-[11px]" fill="none" stroke="#fff"><path d="M5 3.500h9.500v7H5z" /><path d="M7 5h6v4H7z" fill="#fff" /><path d="M1 0v3M4 0v3M0 3.500h5v2L2.500 7v3.500H5" /></svg>
        <svg width="13" height="13" viewBox="0 0 13 13" className="ml-[10px]" fill="none" stroke="#ddd"><path d="M1 12C1 6 6 1 12 1M4 12c0-4 4-8 8-8M7 12c0-3 2-5 5-5" /><circle cx="11" cy="11" r="1.500" fill="#fff" /></svg>
        <svg width="17" height="14" viewBox="0 0 17 14" className="ml-[9px]" fill="none" stroke="#fff"><path d="M1 5h3l3-3v10L4 9H1zM9.500 4.500c1 1 1 4 0 5M12 3c2 2 2 6 0 8M14 1c3 3 3 9 0 12" /></svg>
        <span className="ml-[8px] w-[28px] text-[11.5px]">ENG</span>
        <div className="w-[68px] whitespace-nowrap text-center text-[11.500px] leading-[18px] tracking-[-0.3px]">8:57 PM<br />9/15/2024</div>
        <svg width="16" height="17" viewBox="0 0 16 17" className="ml-[10px] mr-[25px]" fill="none" stroke="#fff"><path d="M.500.500h15v12h-5l-2.500 3-2.500-3h-5z" /></svg>
      </div>
    </div>
  );
}

export default function App() {
  return (
    <div className="relative flex h-[768px] w-[1366px] flex-col overflow-hidden bg-white font-['Open_Sans',sans-serif]">
      <TitleBar />
      <TabBar />
      <Ribbon />
      <FormulaBar />
      <Sheet />
      <SheetTabs />
      <StatusBar />
      <Taskbar />

      {/* overlays */}
      <div className="pointer-events-none absolute left-[1073px] top-[651px] whitespace-nowrap text-[#8c8c8c]/60">
        <div className="text-[19px] leading-[22px]">Activate Windows</div>
        <div className="text-[14px] leading-[24px] tracking-[0.18px]">Go to Settings to activate Windows.</div>
      </div>
      <div className="pointer-events-none absolute left-[600px] top-[671px] w-[166px]">
        <div className="whitespace-nowrap text-center font-['DejaVu_Sans',sans-serif] text-[46px] font-bold leading-[54px] text-[#999]/25">مستقل</div>
        <div className="whitespace-nowrap text-center font-['Liberation_Sans',sans-serif] text-[26.5px] font-bold leading-[26px] text-[#bbb]/50">mostaql.com</div>
      </div>
    </div>
  );
}
